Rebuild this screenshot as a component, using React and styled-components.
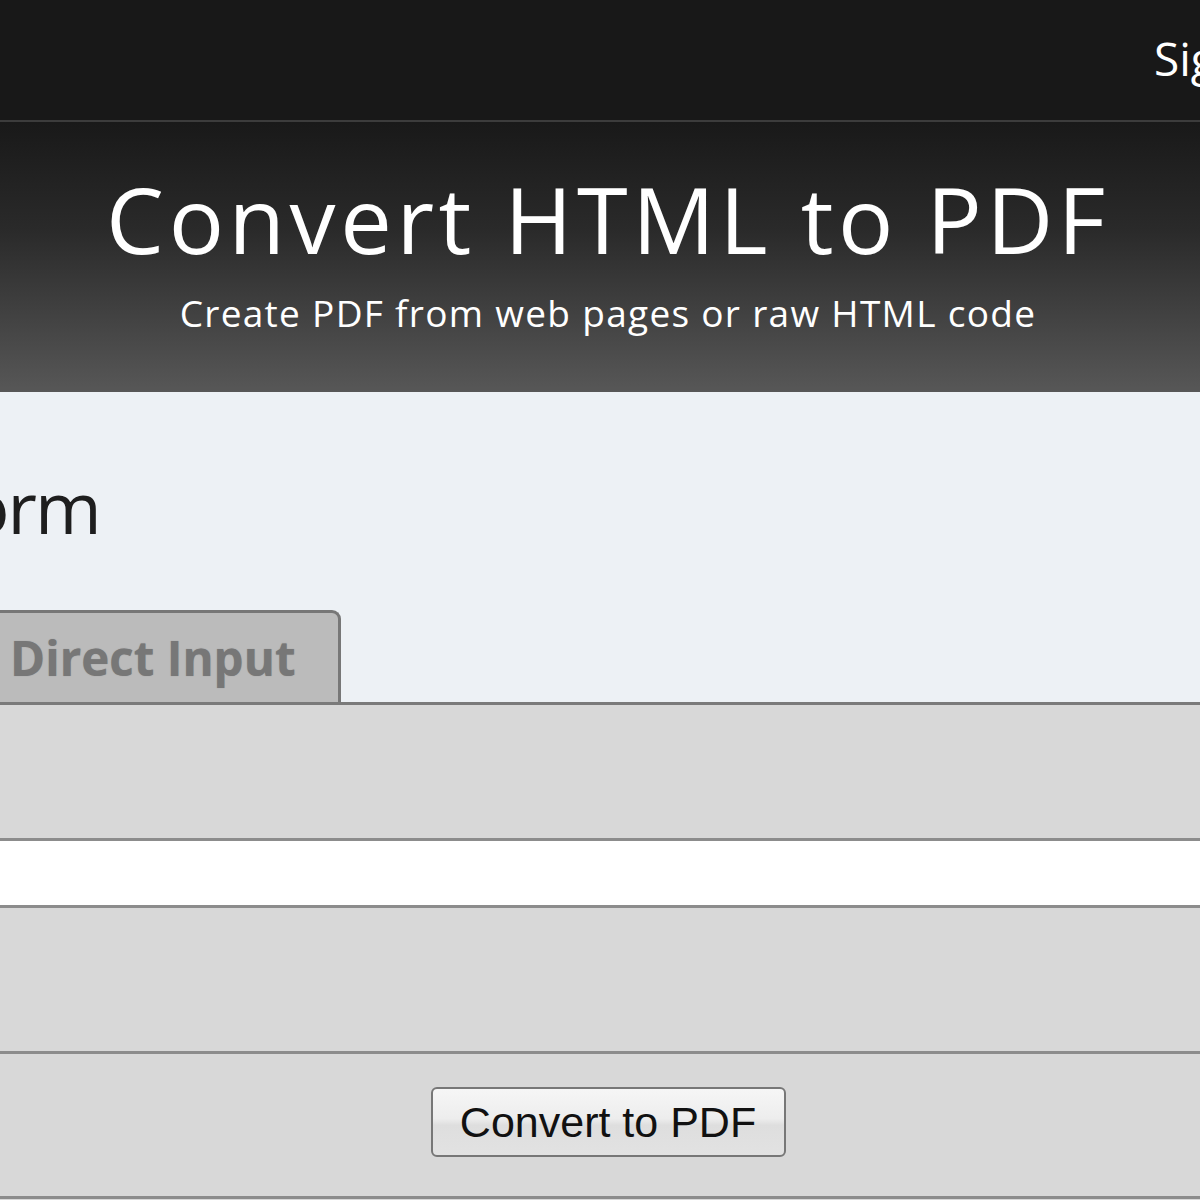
import React from "react";
import styled, { createGlobalStyle } from "styled-components";

const GlobalStyle = createGlobalStyle`
  html, body {
    margin: 0;
    padding: 0;
    background: #d8d8d8;
    overflow: hidden;
  }
  body {
    font-family: "Open Sans", "DejaVu Sans", sans-serif;
  }
`;

const Page = styled.div`
  width: 1200px;
  height: 1200px;
  overflow: hidden;
  display: flex;
  flex-direction: column;
`;

const TopBar = styled.div`
  height: 122px;
  background: #181818;
  border-bottom: 2px solid #3c3c3c;
  display: flex;
  align-items: center;
  justify-content: flex-end;
  padding-bottom: 4px;
  box-sizing: border-box;
`;

const NavLink = styled.a`
  color: #ffffff;
  font-size: 46px;
  text-decoration: none;
  white-space: nowrap;
  margin-right: -70px;
  width: 116px;
`;

const Hero = styled.div`
  height: 270px;
  background: linear-gradient(to bottom, #191919 0%, #2a2a2a 40%, #575757 100%);
  display: flex;
  flex-direction: column;
  align-items: center;
  padding-left: 16px;
  box-sizing: border-box;
  padding-top: 47px;
`;

const Title = styled.h1`
  margin: 0;
  color: #ffffff;
  font-weight: 400;
  font-size: 92px;
  letter-spacing: 4.6px;
  line-height: 100px;
`;

const Subtitle = styled.p`
  margin: 22px 0 0;
  color: #ffffff;
  font-size: 37px;
  letter-spacing: 1.3px;
  line-height: 44px;
`;

const Content = styled.div`
  background: #edf1f5;
  height: 310px;
  display: flex;
  flex-direction: column;
  justify-content: space-between;
  box-sizing: border-box;
  padding-top: 64px;
`;

const Heading = styled.h2`
  margin: 0 0 0 -69px;
  font-weight: 400;
  font-size: 72px;
  letter-spacing: -2px;
  color: #1e1e1e;
  line-height: 100px;
`;

const Tabs = styled.div`
  display: flex;
  align-items: flex-end;
`;

const Tab = styled.div`
  width: 357px;
  height: 92px;
  margin-left: -16px;
  box-sizing: border-box;
  background: ${(p) => (p.$active ? "#d8d8d8" : "#bbbbbb")};
  border: 3px solid #777777;
  border-bottom: none;
  border-top-right-radius: 9px;
  display: flex;
  align-items: center;
  padding-left: 23px;
  font-weight: 700;
  font-size: 47.5px;
  color: #777777;
  text-shadow: 0 0 1px #8a8a8a;
`;

const Panel = styled.div`
  flex: 1;
  background: #d8d8d8;
  border-top: 3px solid #7a7a7a;
  display: flex;
  flex-direction: column;
`;

const Row = styled.div`
  height: ${(p) => p.$h}px;
  border-bottom: 3px solid #8c8c8c;
  box-sizing: border-box;
  flex-shrink: 0;
`;

const UrlInput = styled.input`
  display: block;
  width: 100%;
  height: 64px;
  border: none;
  background: #ffffff;
  outline: none;
  border-bottom: 3px solid #8c8c8c;
  box-sizing: content-box;
  padding: 0;
  flex-shrink: 0;
`;

const Actions = styled.div`
  height: 145px;
  flex-shrink: 0;
  display: flex;
  justify-content: center;
  align-items: center;
  padding: 0 0 6px 16px;
  border-bottom: 3px solid #8c8c8c;
  box-sizing: border-box;
`;

const Button = styled.button`
  width: 355px;
  height: 70px;
  border: 2px solid #777777;
  border-radius: 6px;
  background: linear-gradient(to bottom, #f6f6f6 0%, #ededed 45%, #dedede 55%, #e2e2e2 100%);
  font-family: "Liberation Sans", Arial, sans-serif;
  font-size: 43px;
  color: #111111;
  padding: 0;
`;

export default function App() {
  return (
    <Page>
      <GlobalStyle />
      <TopBar>
        <NavLink href="#">Sign in</NavLink>
      </TopBar>
      <Hero>
        <Title>Convert HTML to PDF</Title>
        <Subtitle>Create PDF from web pages or raw HTML code</Subtitle>
      </Hero>
      <Content>
        <Heading>Form</Heading>
        <Tabs>
          <Tab>Direct Input</Tab>
        </Tabs>
      </Content>
      <Panel>
        <Row $h={136} />
        <UrlInput type="text" />
        <Row $h={146} />
        <Actions>
          <Button>Convert to PDF</Button>
        </Actions>
      </Panel>
    </Page>
  );
}
